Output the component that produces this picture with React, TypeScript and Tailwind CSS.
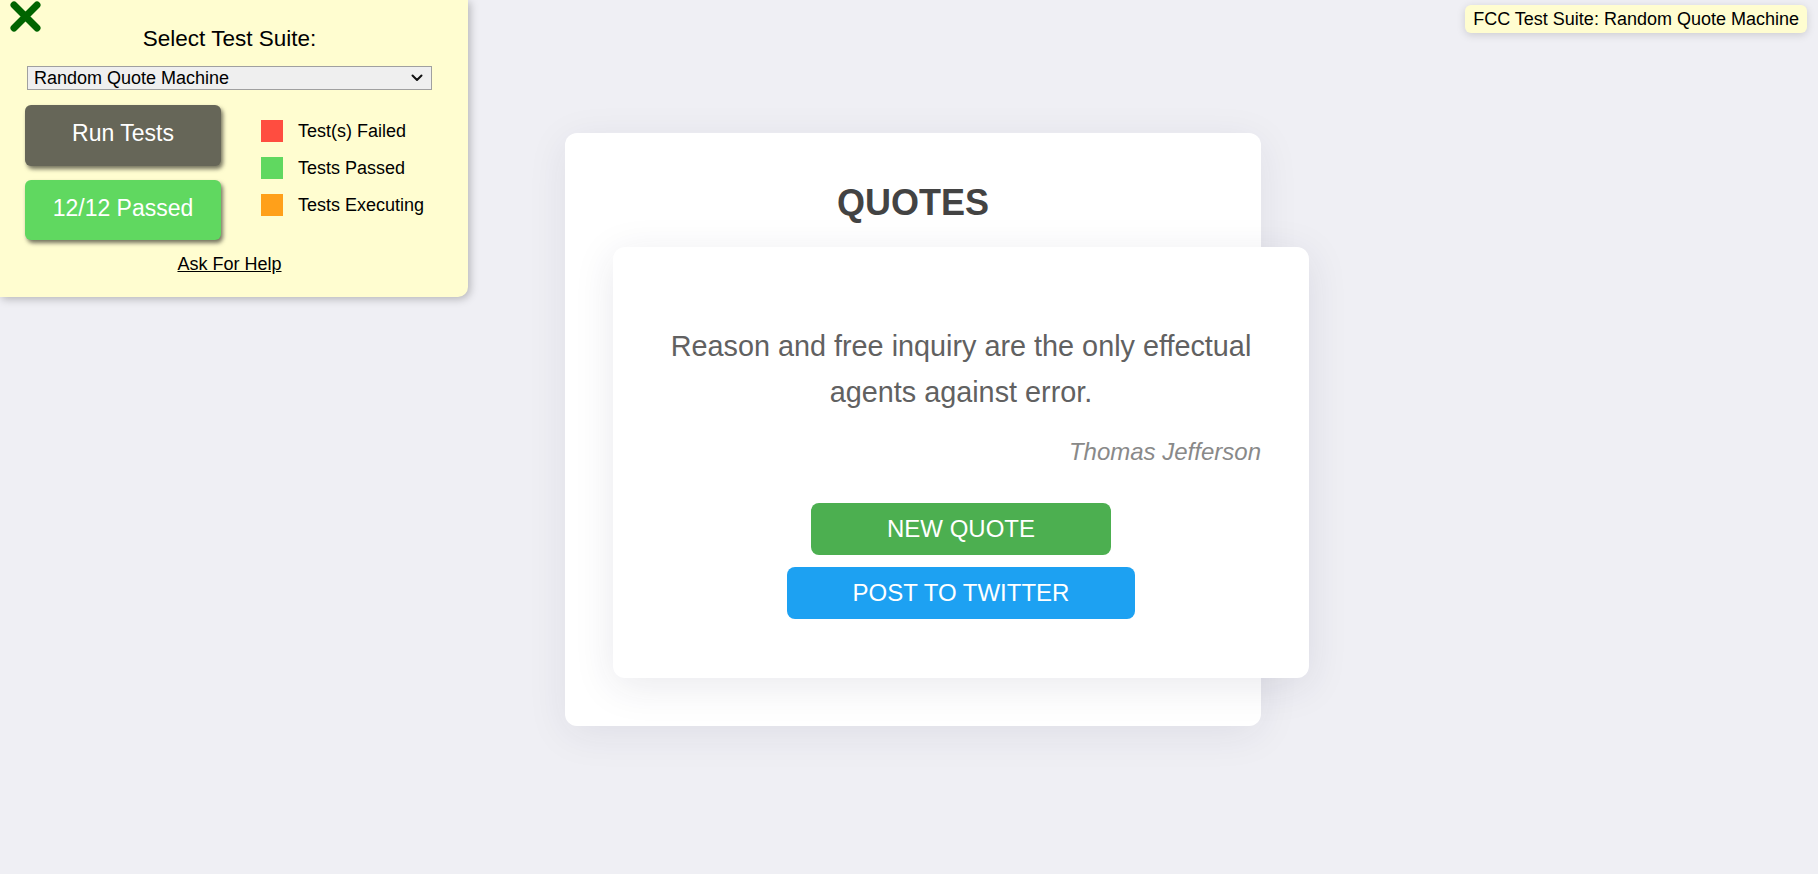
import React from "react";

function TestPanel() {
  return (
    <div className="absolute left-0 top-0 w-[468px] rounded-br-[10px] bg-[#fffdd0] pl-[27px] pr-[36px] pt-[26px] pb-[23px] shadow-[2px_2px_8px_rgba(0,0,0,0.25)] text-black">
      <svg className="absolute left-[10px] top-[1px]" width="31" height="31" viewBox="0 0 31 31">
        <path d="M4 4 L27 27 M27 4 L4 27" stroke="#006400" strokeWidth="7" strokeLinecap="round" fill="none" />
      </svg>
      <div className="text-center text-[22.5px] leading-[25px]">Select Test Suite:</div>
      <div className="mt-[15px] flex h-[24px] w-[405px] items-center justify-between border border-[#a0a0a0] bg-[#efefef] pl-[6px] pr-[8px] text-[18px] leading-[20px]">
        <span>Random Quote Machine</span>
        <svg width="12" height="8" viewBox="0 0 12 8">
          <path d="M1.5 1.5 L6 6 L10.5 1.5" stroke="#111" strokeWidth="2" fill="none" strokeLinecap="round" strokeLinejoin="round" />
        </svg>
      </div>
      <div className="mt-[15px] flex">
        <div className="-ml-[2px] flex w-[196px] flex-col gap-[14px]">
          <div className="flex h-[61px] items-center justify-center rounded-[6px] bg-[#666658] pb-[5px] text-[23px] text-white shadow-[2px_3px_4px_rgba(0,0,0,0.55)]">
            Run Tests
          </div>
          <div className="flex h-[60px] items-center justify-center rounded-[6px] bg-[#60d860] pb-[4px] text-[23px] text-white shadow-[2px_3px_4px_rgba(0,0,0,0.55)]">
            12/12 Passed
          </div>
        </div>
        <div className="ml-[40px] mt-[15px] flex flex-col gap-[15px] text-[18px] leading-[22px]">
          <div className="flex items-center">
            <div className="h-[22px] w-[22px] bg-[#ff4d40]" />
            <span className="ml-[15px]">Test(s) Failed</span>
          </div>
          <div className="flex items-center">
            <div className="h-[22px] w-[22px] bg-[#60d860]" />
            <span className="ml-[15px]">Tests Passed</span>
          </div>
          <div className="flex items-center">
            <div className="h-[22px] w-[22px] bg-[#ffa01a]" />
            <span className="ml-[15px]">Tests Executing</span>
          </div>
        </div>
      </div>
      <div className="mt-[14px] w-[405px] text-center text-[18px] leading-[20px]">
        <span className="underline">Ask For Help</span>
      </div>
    </div>
  );
}

export default function App() {
  return (
    <div className="relative min-h-screen w-full bg-[#efeff4] font-['Liberation_Sans',Arial,sans-serif]">
      <div className="flex justify-center pl-[8px] pt-[133px] pb-[20px]">
        <div className="w-[696px] rounded-[12px] bg-white px-[48px] pt-[49px] pb-[48px] shadow-[0_8px_40px_rgba(40,40,80,0.08)]">
          <h1 className="text-center text-[36px] font-bold leading-[41px] text-[#434343]">QUOTES</h1>
          <div className="mt-[24px] flex w-[696px] flex-col items-center rounded-[12px] bg-white px-[48px] pt-[76px] pb-[59px] shadow-[0_8px_40px_rgba(40,40,80,0.1)]">
            <p className="text-center text-[28.8px] leading-[46px] text-[#616161]">
              Reason and free inquiry are the only effectual agents against error.
            </p>
            <div className="mt-[23px] w-full text-right text-[24px] italic leading-[28px] text-[#898989]">
              Thomas Jefferson
            </div>
            <div className="mt-[37px] flex h-[52px] w-[300px] items-center justify-center rounded-[8px] bg-[#4caf50] text-[24px] text-white">
              NEW QUOTE
            </div>
            <div className="mt-[12px] flex h-[52px] w-[348px] items-center justify-center rounded-[8px] bg-[#1da1f2] text-[24px] text-white">
              POST TO TWITTER
            </div>
          </div>
        </div>
      </div>
      <TestPanel />
      <div className="absolute right-[11px] top-[5px] flex h-[28px] items-center rounded-[6px] bg-[#fffdd0] px-[8px] text-[18px] text-black shadow-[0_2px_8px_rgba(0,0,0,0.15)]">
        FCC Test Suite: Random Quote Machine
      </div>
    </div>
  );
}
